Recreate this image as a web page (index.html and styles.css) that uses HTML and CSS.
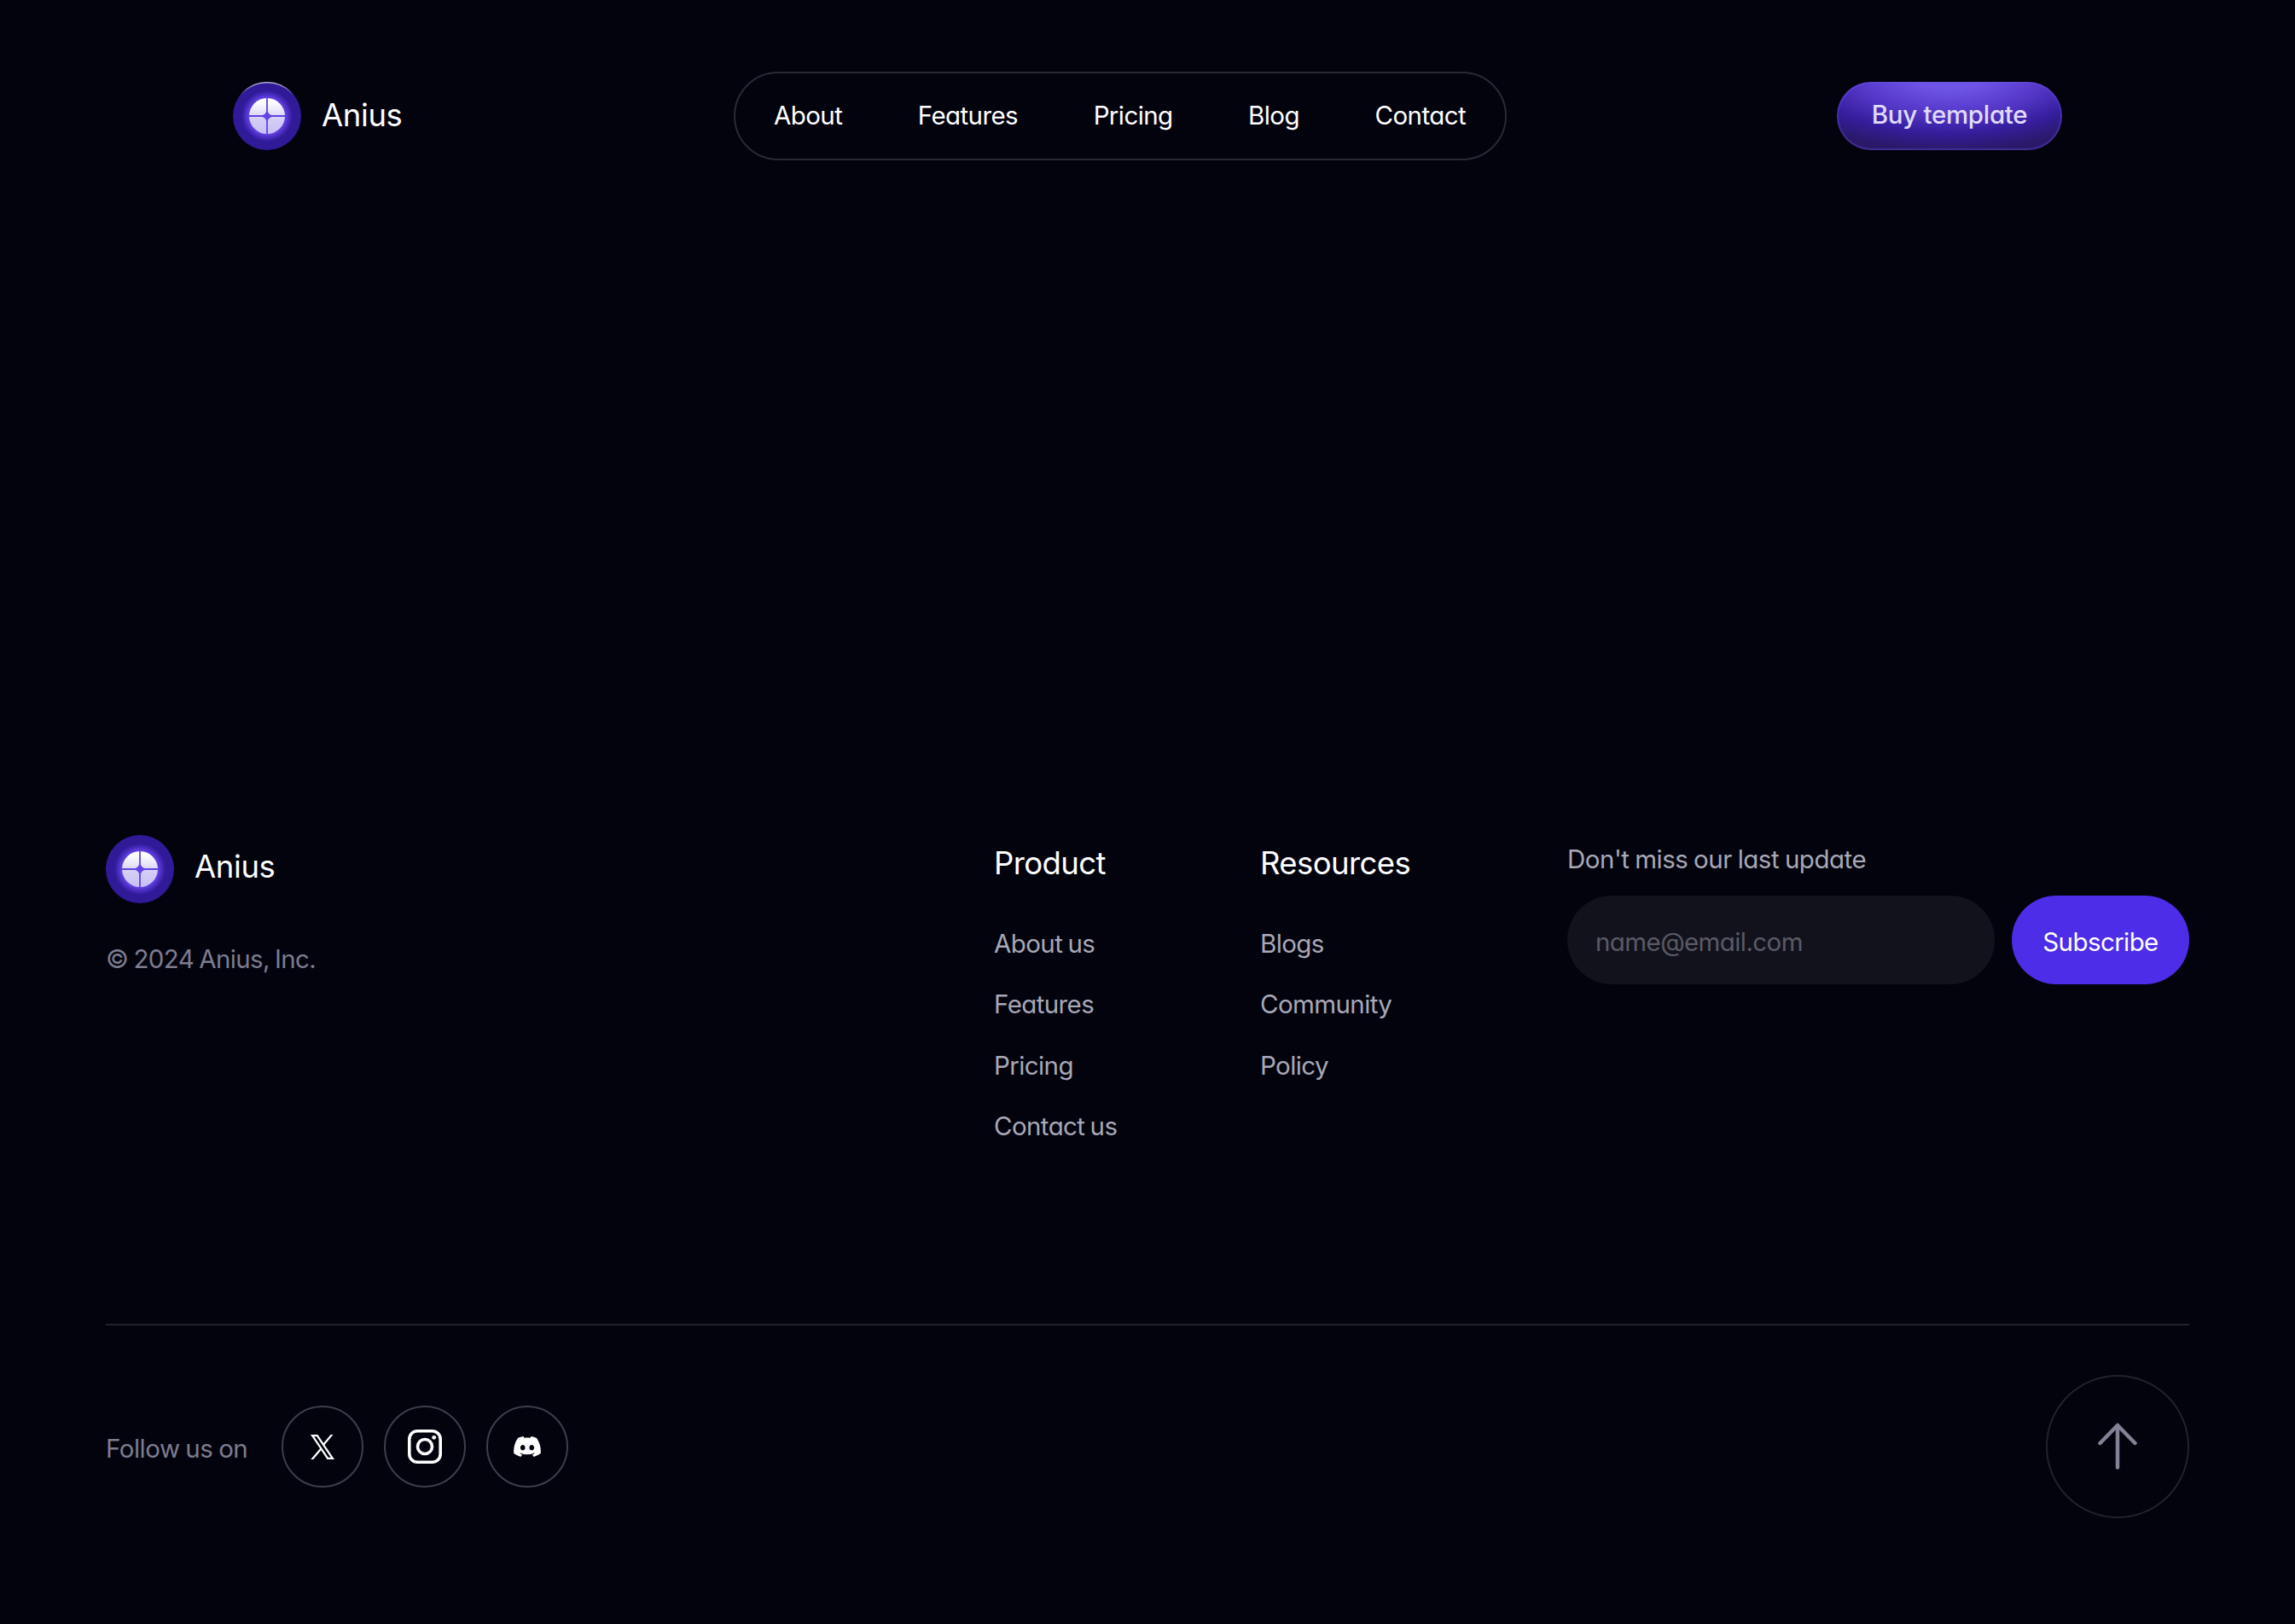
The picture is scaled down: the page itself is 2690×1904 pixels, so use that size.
FILE: index.html
```
<!DOCTYPE html>
<html lang="en">
<head>
    <meta charset="UTF-8">
    <meta name="viewport" content="width=device-width, initial-scale=1.0">
    <title>Anius</title>
    <link rel="stylesheet" href="styles.css">
</head>
<body>

    <!-- ======= Logo symbol ======= -->
    <svg class="symbols" width="0" height="0" aria-hidden="true">
        <defs>
            <radialGradient id="logo-glow">
                <stop offset="0" stop-color="#6a4fe6"/>
                <stop offset="0.72" stop-color="#6040e0"/>
                <stop offset="0.86" stop-color="#482bbd"/>
                <stop offset="1" stop-color="#301a98"/>
            </radialGradient>
            <linearGradient id="logo-face" x1="0" y1="0" x2="0" y2="1">
                <stop offset="0.1" stop-color="#ffffff"/>
                <stop offset="0.6" stop-color="#d3ccf6"/>
                <stop offset="1" stop-color="#c8c0f4"/>
            </linearGradient>
            <linearGradient id="logo-rim" x1="0" y1="0" x2="0" y2="1">
                <stop offset="0" stop-color="#ffffff" stop-opacity="0.75"/>
                <stop offset="0.2" stop-color="#ffffff" stop-opacity="0"/>
            </linearGradient>
            <symbol id="logo" viewBox="0 0 80 80">
                <circle cx="40" cy="40" r="40" fill="#301a98"/>
                <circle cx="40" cy="40" r="30" fill="url(#logo-glow)"/>
                <circle cx="40" cy="40" r="21" fill="url(#logo-face)"/>
                <path d="M39.100 18h1.800v16.500q1 3.600 4.600 4.600H62v1.800H45.500q-3.600 1-4.600 4.600V62h-1.800V45.500q-1-3.600-4.600-4.600H18v-1.800h16.500q3.600-1 4.600-4.600z" fill="#6243df"/>
            </symbol>
        </defs>
    </svg>

    <!-- ======= Header ======= -->
    <header class="header">
        <a class="brand" href="#">
            <svg class="brand-logo" viewBox="0 0 80 80">
                <use href="#logo"/>
                <circle cx="40" cy="40" r="39.400" fill="none" stroke="url(#logo-rim)" stroke-width="1.200"/>
            </svg>
            <span class="brand-name">Anius</span>
        </a>
        <nav class="nav">
            <a href="#">About</a>
            <a href="#">Features</a>
            <a href="#">Pricing</a>
            <a href="#">Blog</a>
            <a href="#">Contact</a>
        </nav>
        <a class="buy-button" href="#">Buy template</a>
    </header>

    <!-- ======= Footer ======= -->
    <footer class="footer">
        <div class="footer-top">
            <div class="footer-brand">
                <a class="brand" href="#">
                    <svg class="brand-logo" viewBox="0 0 80 80"><use href="#logo"/></svg>
                    <span class="brand-name">Anius</span>
                </a>
                <p class="copyright">© 2024 Anius, Inc.</p>
            </div>

            <div class="footer-column">
                <h3>Product</h3>
                <ul>
                    <li><a href="#">About us</a></li>
                    <li><a href="#">Features</a></li>
                    <li><a href="#">Pricing</a></li>
                    <li><a href="#">Contact us</a></li>
                </ul>
            </div>

            <div class="footer-column">
                <h3>Resources</h3>
                <ul>
                    <li><a href="#">Blogs</a></li>
                    <li><a href="#">Community</a></li>
                    <li><a href="#">Policy</a></li>
                </ul>
            </div>

            <form class="newsletter">
                <label for="email">Don't miss our last update</label>
                <div class="newsletter-row">
                    <input type="email" id="email" placeholder="name@email.com">
                    <button type="submit">Subscribe</button>
                </div>
            </form>
        </div>

        <div class="footer-bottom">
            <div class="social">
                <span class="social-label">Follow us on</span>
                <a class="social-link" href="#" aria-label="X">
                    <svg width="28" height="29" viewBox="0 0 24 24" preserveAspectRatio="none" fill="#fff">
                        <path d="M0 0h7.300l5.700 8.200L20.200 0h2.500l-8.600 9.900L24 24h-7.300l-6.100-8.900L2.800 24H.200l9.300-10.600zM3.600 1.900l14.200 20.200h2.600L6.200 1.900z" fill-rule="evenodd"/>
                    </svg>
                </a>
                <a class="social-link" href="#" aria-label="Instagram">
                    <svg width="40" height="40" viewBox="0 0 40 40" fill="none" stroke="#fff" stroke-width="3.600">
                        <rect x="1.800" y="1.800" width="36.400" height="36.400" rx="9.500"/>
                        <circle cx="20" cy="20" r="8.500"/>
                        <circle cx="30.700" cy="9.300" r="2.400" fill="#fff" stroke="none"/>
                    </svg>
                </a>
                <a class="social-link" href="#" aria-label="Discord">
                    <svg width="32" height="24" viewBox="0 0 127.140 96.360" fill="#fff">
                        <path d="M107.700 8.070A105.150 105.150 0 0 0 81.470 0a72.060 72.060 0 0 0-3.360 6.830 97.680 97.680 0 0 0-29.110 0A72.370 72.370 0 0 0 45.640 0a105.890 105.890 0 0 0-26.250 8.090C2.790 32.650-1.710 56.600.54 80.210a105.730 105.730 0 0 0 32.170 16.150 77.700 77.700 0 0 0 6.890-11.110 68.420 68.420 0 0 1-10.850-5.180c.91-.66 1.800-1.340 2.660-2a75.570 75.570 0 0 0 64.320 0c.87.710 1.760 1.390 2.660 2a68.680 68.680 0 0 1-10.870 5.190 77 77 0 0 0 6.890 11.100 105.250 105.250 0 0 0 32.190-16.140c2.640-27.380-4.510-51.110-18.900-72.150zM42.450 65.690C36.180 65.690 31 60 31 53s5-12.740 11.430-12.740S54 46 53.890 53s-5.050 12.690-11.440 12.690zm42.240 0C78.410 65.690 73.250 60 73.250 53s5-12.740 11.440-12.740S96.230 46 96.120 53s-5.040 12.690-11.430 12.690z"/>
                    </svg>
                </a>
            </div>
            <a class="to-top" href="#" aria-label="Back to top">
                <svg width="46" height="56" viewBox="0 0 46 56" fill="none" stroke="#828296" stroke-width="4.500" stroke-linecap="round" stroke-linejoin="round">
                    <path d="M23 52.500V3M2.500 24 23 3l20.500 21"/>
                </svg>
            </a>
        </div>
    </footer>
</body>
</html>
```
FILE: styles.css
```
* {
    box-sizing: border-box;
    margin: 0;
    padding: 0;
}

body {
    min-height: 1904px;
    display: flex;
    flex-direction: column;
    justify-content: space-between;
    padding: 84px 124px 124px;
    background-color: #03030e;
    color: #fff;
    font-family: Inter, "Liberation Sans", sans-serif;
    font-feature-settings: "cv11";
    font-size: 29.5px;
    letter-spacing: -0.6px;
    word-spacing: -1.5px;
    line-height: 40px;
}

a {
    color: inherit;
    text-decoration: none;
}

.symbols {
    position: absolute;
}

/* Header */
.header {
    display: grid;
    grid-template-columns: 587px 906px 1fr;
    align-items: center;
    padding: 0 149px;
}

.brand {
    display: flex;
    align-items: center;
    gap: 24px;
}

.brand-logo {
    width: 80px;
    height: 80px;
}

.brand-name {
    padding-bottom: 2px;
    font-size: 36.5px;
    letter-spacing: -0.4px;
}

.footer-brand .brand-name {
    padding-bottom: 6px;
}

.nav {
    display: flex;
    justify-content: space-between;
    align-items: center;
    height: 104px;
    padding: 0 46px 2px 45px;
    border: 2px solid #2a2a35;
    border-radius: 52px;
}

.buy-button {
    justify-self: end;
    display: flex;
    align-items: center;
    justify-content: center;
    width: 264px;
    height: 80px;
    padding-bottom: 4px;
    border-radius: 40px;
    background: radial-gradient(ellipse 230px 95px at 50% -12%, #6f55e6 18%, #5638c9 48%, #351d9c 73%, #2a1968 95%);
    box-shadow: inset 0 0 0 2px rgba(106, 80, 230, 0.35);
    color: #e0dbfb;
    font-weight: 500;
    letter-spacing: -0.3px;
    word-spacing: 0;
}

/* Footer */
.footer-top {
    display: grid;
    grid-template-columns: 1041px 312px 360px 729px;
    height: 573px;
}

.copyright {
    margin-top: 45px;
    color: #7c7c8e;
    letter-spacing: -0.65px;
}

.footer-column h3 {
    margin: 13px 0 54px;
    font-size: 36.5px;
    font-weight: 400;
    letter-spacing: -0.6px;
}

.footer-column ul {
    display: flex;
    flex-direction: column;
    gap: 31.4px;
    list-style: none;
}

.footer-column li,
.newsletter label {
    color: #a8a8b6;
}

.newsletter label {
    display: block;
    margin: 8px 0 23px;
    letter-spacing: -0.5px;
    word-spacing: -1px;
}

.newsletter-row {
    display: flex;
    gap: 20px;
}

.newsletter input,
.newsletter button {
    height: 104px;
    border: none;
    border-radius: 52px;
    color: #fff;
    font: inherit;
    font-feature-settings: inherit;
    letter-spacing: inherit;
}

.newsletter input {
    width: 501px;
    padding: 4px 33px 0;
    background-color: #12121c;
}

.newsletter input::placeholder {
    color: #5a5a66;
}

.newsletter button {
    width: 208px;
    padding-top: 4px;
    background-color: #4d2de8;
}

.footer-bottom {
    display: flex;
    justify-content: space-between;
    align-items: center;
    padding-top: 58px;
    border-top: 2px solid #22222b;
}

.social {
    display: flex;
    align-items: center;
    gap: 24px;
}

.social-label {
    width: 182px;
    padding-top: 3px;
    color: #7c7c8e;
    letter-spacing: -0.5px;
    word-spacing: -1px;
}

.social-link,
.to-top {
    display: flex;
    align-items: center;
    justify-content: center;
    width: 96px;
    height: 96px;
    border: 2px solid #3e3e4b;
    border-radius: 50%;
}

.to-top {
    width: 168px;
    height: 168px;
    border-color: #22222b;
}
```
